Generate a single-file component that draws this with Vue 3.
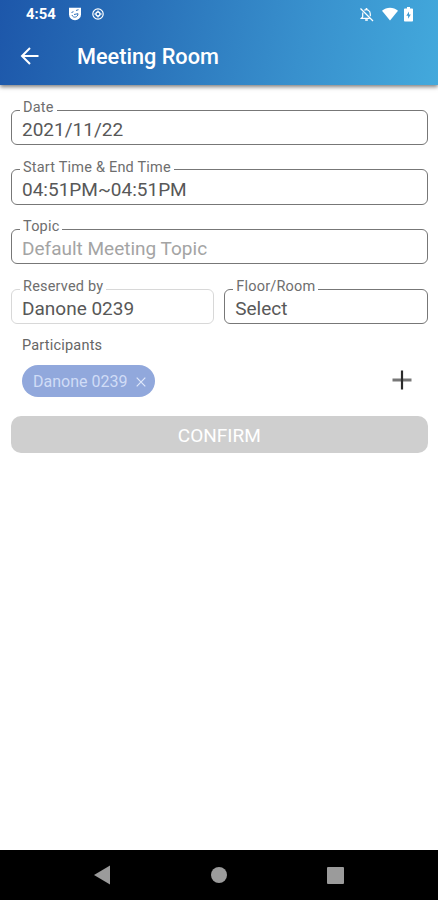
<script setup>
import { ref } from 'vue'

const title = 'Meeting Room'

// full-width fields
const fields = ref([
  { id: 'date', label: 'Date', value: '2021/11/22' },
  { id: 'time', label: 'Start Time & End Time', value: '04:51PM~04:51PM' },
  { id: 'topic', label: 'Topic', value: '', placeholder: 'Default Meeting Topic' }
])

// fields sharing one row
const halfFields = ref([
  { id: 'owner', label: 'Reserved by', value: 'Danone 0239', disabled: true },
  { id: 'room', label: 'Floor/Room', value: 'Select' }
])

const participants = ref(['Danone 0239'])

function removeParticipant(index) {
  participants.value.splice(index, 1)
}
</script>

<template>
  <div class="screen">
    <header class="top">
      <div class="status-bar">
        <span class="clock">4:54</span>
        <svg class="ic-app" width="14" height="14" viewBox="0 0 14 14">
          <path d="M1 .8h12v6.700a6 5.700 0 0 1-12 0z" fill="#fff" />
          <path d="M3.500 5.500l2-.8M8 3.500l2.500-.8M4 8c1 3.500 6 2.500 6-1.300l-4 .8" fill="none" stroke="#3474bb" stroke-width="1" />
        </svg>
        <svg class="ic-target" width="12" height="12" viewBox="0 0 12 12" fill="none" stroke="#fff">
          <circle cx="6" cy="6" r="5.200" stroke-width="1.200" />
          <circle cx="6" cy="6" r="2" stroke-width="1.300" />
          <path d="M6 2.500v1.500M6 8v1.500M2.200 6h1.800M8 6h1.800" stroke-width="1.200" />
        </svg>
        <span class="spacer"></span>
        <svg class="ic-bell" width="15" height="15" viewBox="0 0 15 15" fill="none" stroke="#fff" stroke-width="1.200">
          <path d="M1.500 1.500l12.500 12.500" />
          <path d="M5.300 3.200C8 1.500 11.300 3.500 11.300 7v2.200M3.900 5.500c-.3 1-.2 3-.2 4.300L2.300 11.300h8.500" />
          <path d="M7.500 1v2" stroke-width="1.600" />
          <path d="M6.200 13h2.600" stroke-width="1.600" />
        </svg>
        <svg class="ic-wifi" width="16" height="14" viewBox="0 0 16 14">
          <path d="M0 3.800C4.500-.3 11.500-.3 16 3.800L8 13.500z" fill="#fff" />
        </svg>
        <svg class="ic-battery" width="9" height="15" viewBox="0 0 9 15">
          <path d="M3 0h3v1.500h2.200q.8 0 .8.800v11.400q0 .8-.8.800H.8q-.8 0-.8-.8V2.300q0-.8.8-.8H3z" fill="#fff" />
          <path d="M5 4.500L2.300 8.700h1.800v3L6.800 7.500H5z" fill="#409bd3" />
        </svg>
      </div>
      <div class="app-bar">
        <svg class="back" width="20" height="20" viewBox="0 0 20 20" fill="none" stroke="#fff" stroke-width="2">
          <path d="M18.500 10H2.500M10 2L2 10l8 8" />
        </svg>
        <h1>{{ title }}</h1>
      </div>
    </header>

    <main class="form">
      <fieldset v-for="field in fields" :key="field.id" class="field">
        <legend>{{ field.label }}</legend>
        <div class="value" :class="[field.id, { placeholder: !field.value }]">
          {{ field.value || field.placeholder }}
        </div>
      </fieldset>

      <div class="row">
        <fieldset v-for="field in halfFields" :key="field.id" class="field" :class="{ disabled: field.disabled }">
          <legend>{{ field.label }}</legend>
          <div class="value" :class="field.id">{{ field.value }}</div>
        </fieldset>
      </div>

      <section class="participants">
        <div class="caption">Participants</div>
        <div class="chips">
          <span v-for="(name, index) in participants" :key="name" class="chip">
            {{ name }}
            <svg width="10" height="10" viewBox="0 0 10 10" stroke="#dfe8fa" stroke-width="1.200" @click="removeParticipant(index)">
              <path d="M.7.700l8.600 8.600M9.300.700L.7 9.300" />
            </svg>
          </span>
          <svg class="add" width="20" height="20" viewBox="0 0 20 20">
            <path d="M.5 10h19" stroke="#777" stroke-width="3" />
            <path d="M10 .5v19" stroke="#2b2b2b" stroke-width="2.200" />
          </svg>
        </div>
      </section>

      <button class="confirm" type="button">CONFIRM</button>
    </main>

    <!-- system navigation -->
    <nav class="nav-bar">
      <svg width="16" height="20" viewBox="0 0 16 20"><path d="M0 10L16 .5v19z" fill="#9b9b9b" /></svg>
      <svg width="16" height="16" viewBox="0 0 16 16"><circle cx="8" cy="8" r="8" fill="#9b9b9b" /></svg>
      <svg width="17" height="17" viewBox="0 0 17 17"><rect width="17" height="17" rx="1" fill="#9b9b9b" /></svg>
    </nav>
  </div>
</template>

<style>
body {
  margin: 0;
  background: #fff;
}
</style>

<style scoped>
.screen {
  display: flex;
  flex-direction: column;
  width: 438px;
  height: 900px;
  overflow: hidden;
  background: #fff;
  font-family: Roboto, "Noto Sans", sans-serif;
}

.top {
  flex: none;
  height: 85px;
  color: #fff;
  background: linear-gradient(101deg, #1d57aa 0%, #2971b9 32%, #3890cd 68%, #43a9dc 100%);
  box-shadow: 0 2px 4px rgba(0, 0, 0, 0.5);
}

.status-bar {
  display: flex;
  align-items: center;
  height: 28px;
  padding: 0 24px 0 26px;
}

.clock {
  width: 42px;
  font-size: 14.800px;
  font-weight: 700;
}

.ic-target {
  margin-left: 10px;
}

.spacer {
  flex: 1;
}

.ic-bell {
  margin-right: -1px;
}

.ic-wifi {
  margin-left: 9px;
}

.ic-battery {
  margin: 0 1px 0 6px;
}

.app-bar {
  display: flex;
  align-items: center;
  height: 55px;
  padding-left: 20px;
}

h1 {
  margin: 3px 0 0 37px;
  font-size: 21.700px;
  line-height: 28px;
  font-weight: 500;
}

.form {
  flex: 1;
  padding: 14px 10.500px 0 11px;
}

.field {
  box-sizing: border-box;
  min-width: 0;
  height: 46px;
  margin: 0 0 13.700px;
  padding: 0 10px;
  border: 1.500px solid #777;
  border-radius: 6px;
}

.field legend {
  height: 22px;
  margin-left: -2px;
  padding: 0 3px 0 3px;
  color: #6e6e6e;
  font-size: 14.500px;
  line-height: 17px;
  letter-spacing: 0.200px;
}

.value {
  margin-top: -3px;
  color: #585858;
  font-size: 19px;
  line-height: 24px;
  white-space: nowrap;
}

.value.placeholder {
  color: #a4a4a4;
}

.row {
  display: grid;
  grid-template-columns: 1fr 1fr;
  gap: 10px;
}

.field.disabled {
  border-color: #d8d8d8;
}

.participants {
  margin-top: -1px;
  padding: 0 15.500px 0 11px;
}

.caption {
  color: #666;
  font-size: 14.500px;
  line-height: 18px;
  letter-spacing: 0.200px;
}

.chips {
  display: flex;
  align-items: center;
  justify-content: space-between;
  margin-top: 10.500px;
}

.chip {
  display: flex;
  align-items: center;
  box-sizing: border-box;
  gap: 9px;
  height: 32px;
  padding: 1px 9px 0 11px;
  border-radius: 16px;
  background: #91a8dc;
  color: #d0dcf6;
  font-size: 16px;
}

.add {
  margin-bottom: 3px;
}

.confirm {
  display: block;
  width: 100%;
  height: 37px;
  margin-top: 18.500px;
  padding: 2px 0 0;
  border: 0;
  border-radius: 10px;
  background: #cfcfcf;
  color: #fff;
  font-family: inherit;
  font-size: 19px;
}

.nav-bar {
  display: flex;
  flex: none;
  align-items: center;
  justify-content: space-between;
  height: 50px;
  padding: 0 94px;
  box-sizing: border-box;
  background: #000;
}
</style>
